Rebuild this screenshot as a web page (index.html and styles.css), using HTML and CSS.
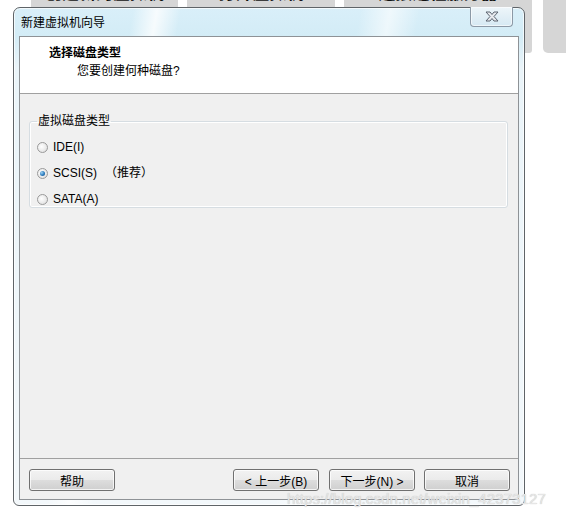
FILE: index.html
```html
<!DOCTYPE html>
<html lang="zh-CN">
<head>
<meta charset="utf-8">
<title>新建虚拟机向导</title>
<link rel="stylesheet" href="styles.css">
</head>
<body>
<div class="desktop">
  <div class="tabs">
    <div class="tab t1"><span>创建新的虚拟机</span></div>
    <div class="tab t2"><span>打开虚拟机</span></div>
    <div class="tab t3"><span>连接远程服务器</span></div>
    <div class="tab t4"></div>
  </div>

  <div class="window">
    <div class="titlebar">
      <span class="title">新建虚拟机向导</span>
      <div class="close">
        <svg width="16" height="11" viewBox="0 0 16 11">
          <path d="M2 1 L6 1 L8 3.5 L10 1 L14 1 L10 5.5 L14 10 L10 10 L8 7.5 L6 10 L2 10 L6 5.5 Z" fill="#e8eaee" stroke="#5c6470" stroke-width="1" stroke-linejoin="round"/>
        </svg>
      </div>
    </div>
    <div class="client">
      <div class="header">
        <div class="h-title">选择磁盘类型</div>
        <div class="h-sub">您要创建何种磁盘?</div>
      </div>
      <div class="body">
        <fieldset class="group">
          <legend>虚拟磁盘类型</legend>
          <label class="radio"><span class="dot"></span><span>IDE(I)</span></label>
          <label class="radio"><span class="dot on"></span><span>SCSI(S)</span><span class="rec">（推荐）</span></label>
          <label class="radio"><span class="dot"></span><span>SATA(A)</span></label>
        </fieldset>
      </div>
      <div class="footer">
        <button class="btn">帮助</button>
        <div class="spacer"></div>
        <button class="btn">&lt; 上一步(B)</button>
        <button class="btn next">下一步(N) &gt;</button>
        <button class="btn cancel">取消</button>
      </div>
    </div>
  </div>

  <div class="watermark">https://blog.csdn.net/weixin_42373127</div>
</div>
</body>
</html>
```

FILE: styles.css
```css
html, body {
  margin: 0;
  padding: 0;
  background: #ffffff;
}
body {
  width: 566px;
  height: 517px;
  overflow: hidden;
  font-family: "Liberation Sans", "Noto Sans CJK SC", sans-serif;
  font-size: 12px;
  color: #000;
}
.desktop {
  position: relative;
  width: 566px;
  height: 517px;
}
.tabs {
  display: flex;
  padding-left: 31px;
  gap: 9px;
}
.tab {
  flex-shrink: 0;
  height: 53px;
  background: #d6d6d6;
  overflow: hidden;
  display: flex;
  justify-content: center;
  border-radius: 0 0 3px 3px;
}
.tab span {
  font-size: 17px;
  font-weight: bold;
  line-height: 20px;
  margin-top: -16px;
  color: #111;
  white-space: nowrap;
}
.t1 { width: 147px; }
.t2 { width: 148px; }
.t3 { width: 188px; }
.t4 { width: 40px; margin-left: 2px; border-radius: 0 0 0 5px; }

.window {
  position: absolute;
  left: 13px;
  top: 7px;
  width: 500px;
  height: 492px;
  border: 1px solid #5f6468;
  border-radius: 7px 7px 6px 6px;
  background:
    linear-gradient(100deg, rgba(255,255,255,0) 0%, rgba(255,255,255,0) 20%, rgba(255,255,255,0.8) 24%, rgba(255,255,255,0) 28%, rgba(255,255,255,0) 58%, rgba(255,255,255,0.6) 63%, rgba(255,255,255,0) 68%),
    linear-gradient(180deg, #d9eff9 0px, #d3ecf6 28px, #eaf4f9 60px, #f3f8fb 100%);
  display: flex;
  flex-direction: column;
  padding: 0 5px 5px 5px;
  box-shadow: inset 0 0 0 1px rgba(255,255,255,0.7);
}
.titlebar {
  position: relative;
  height: 28px;
  display: flex;
  align-items: center;
}
.title {
  padding-left: 2px;
  padding-bottom: 1px;
  font-size: 12px;
  color: #000;
}
.close {
  position: absolute;
  right: 6px;
  top: -1px;
  width: 41px;
  height: 19px;
  border: 1px solid #8c99a6;
  border-top: none;
  border-radius: 0 0 4px 4px;
  background: linear-gradient(180deg, #eef6fa 0%, #e2eff6 50%, #d6e9f3 100%);
  display: flex;
  align-items: center;
  justify-content: center;
  box-shadow: inset 0 0 0 1px rgba(255,255,255,0.6);
}
.close svg { display: block; }

.client {
  flex: 1;
  border: 1px solid #8e9296;
  background: #f0f0f0;
  display: flex;
  flex-direction: column;
}
.header {
  background: #ffffff;
  border-bottom: 1px solid #a0a0a0;
  box-sizing: border-box;
  height: 57px;
  padding-top: 8px;
}
.h-title {
  padding-left: 29px;
  font-weight: bold;
  line-height: 16px;
}
.h-sub {
  padding-left: 57px;
  line-height: 16px;
  margin-top: 2px;
}
.body {
  flex: 1;
  padding: 20px 10px 0 9px;
}
.group {
  margin: 0;
  padding: 6px 0 6px 7px;
  border: 1px solid #d6dde2;
  border-radius: 3px;
  box-shadow: inset 0 0 0 1px #ffffff;
  height: 80px;
}
.group legend {
  padding: 0 1px;
  margin-left: 0;
  font-size: 12px;
  line-height: 14px;
}
.radio {
  display: flex;
  align-items: center;
  height: 26px;
  line-height: 14px;
}
.dot {
  width: 11px;
  height: 11px;
  border-radius: 50%;
  border: 1px solid #9a9a9a;
  background: radial-gradient(circle at 40% 40%, #ffffff 0%, #e9e9e9 60%, #d8d8d8 100%);
  margin-right: 5px;
  box-sizing: border-box;
  display: flex;
  align-items: center;
  justify-content: center;
}
.dot.on::after {
  content: "";
  width: 5px;
  height: 5px;
  border-radius: 50%;
  background: radial-gradient(circle at 35% 35%, #9fd3f5 0%, #2a7bbd 55%, #1a4f86 100%);
}
.rec { margin-left: 8px; }

.footer {
  border-top: 1px solid #a0a0a0;
  display: flex;
  align-items: flex-start;
  padding: 10px 8px 0 9px;
  box-sizing: border-box;
  height: 41px;
}
.spacer { flex: 1; }
.btn {
  width: 86px;
  height: 22px;
  padding: 0;
  font-family: "Liberation Sans", "Noto Sans CJK SC", sans-serif;
  font-size: 12px;
  color: #000;
  border: 1px solid #707070;
  border-radius: 3px;
  background: linear-gradient(180deg, #f2f2f2 0%, #ebebeb 48%, #dddddd 52%, #cfcfcf 100%);
  box-shadow: inset 0 0 0 1px rgba(255,255,255,0.75);
}
.next { margin-left: 10px; }
.cancel { margin-left: 9px; }

.watermark {
  position: absolute;
  left: 287px;
  top: 490px;
  font-family: "Liberation Sans", sans-serif;
  font-size: 15px;
  color: #e6e6e6;
  text-shadow: 0 0 1px #b8b8b8;
  letter-spacing: 0.1px;
  white-space: nowrap;
}
```
